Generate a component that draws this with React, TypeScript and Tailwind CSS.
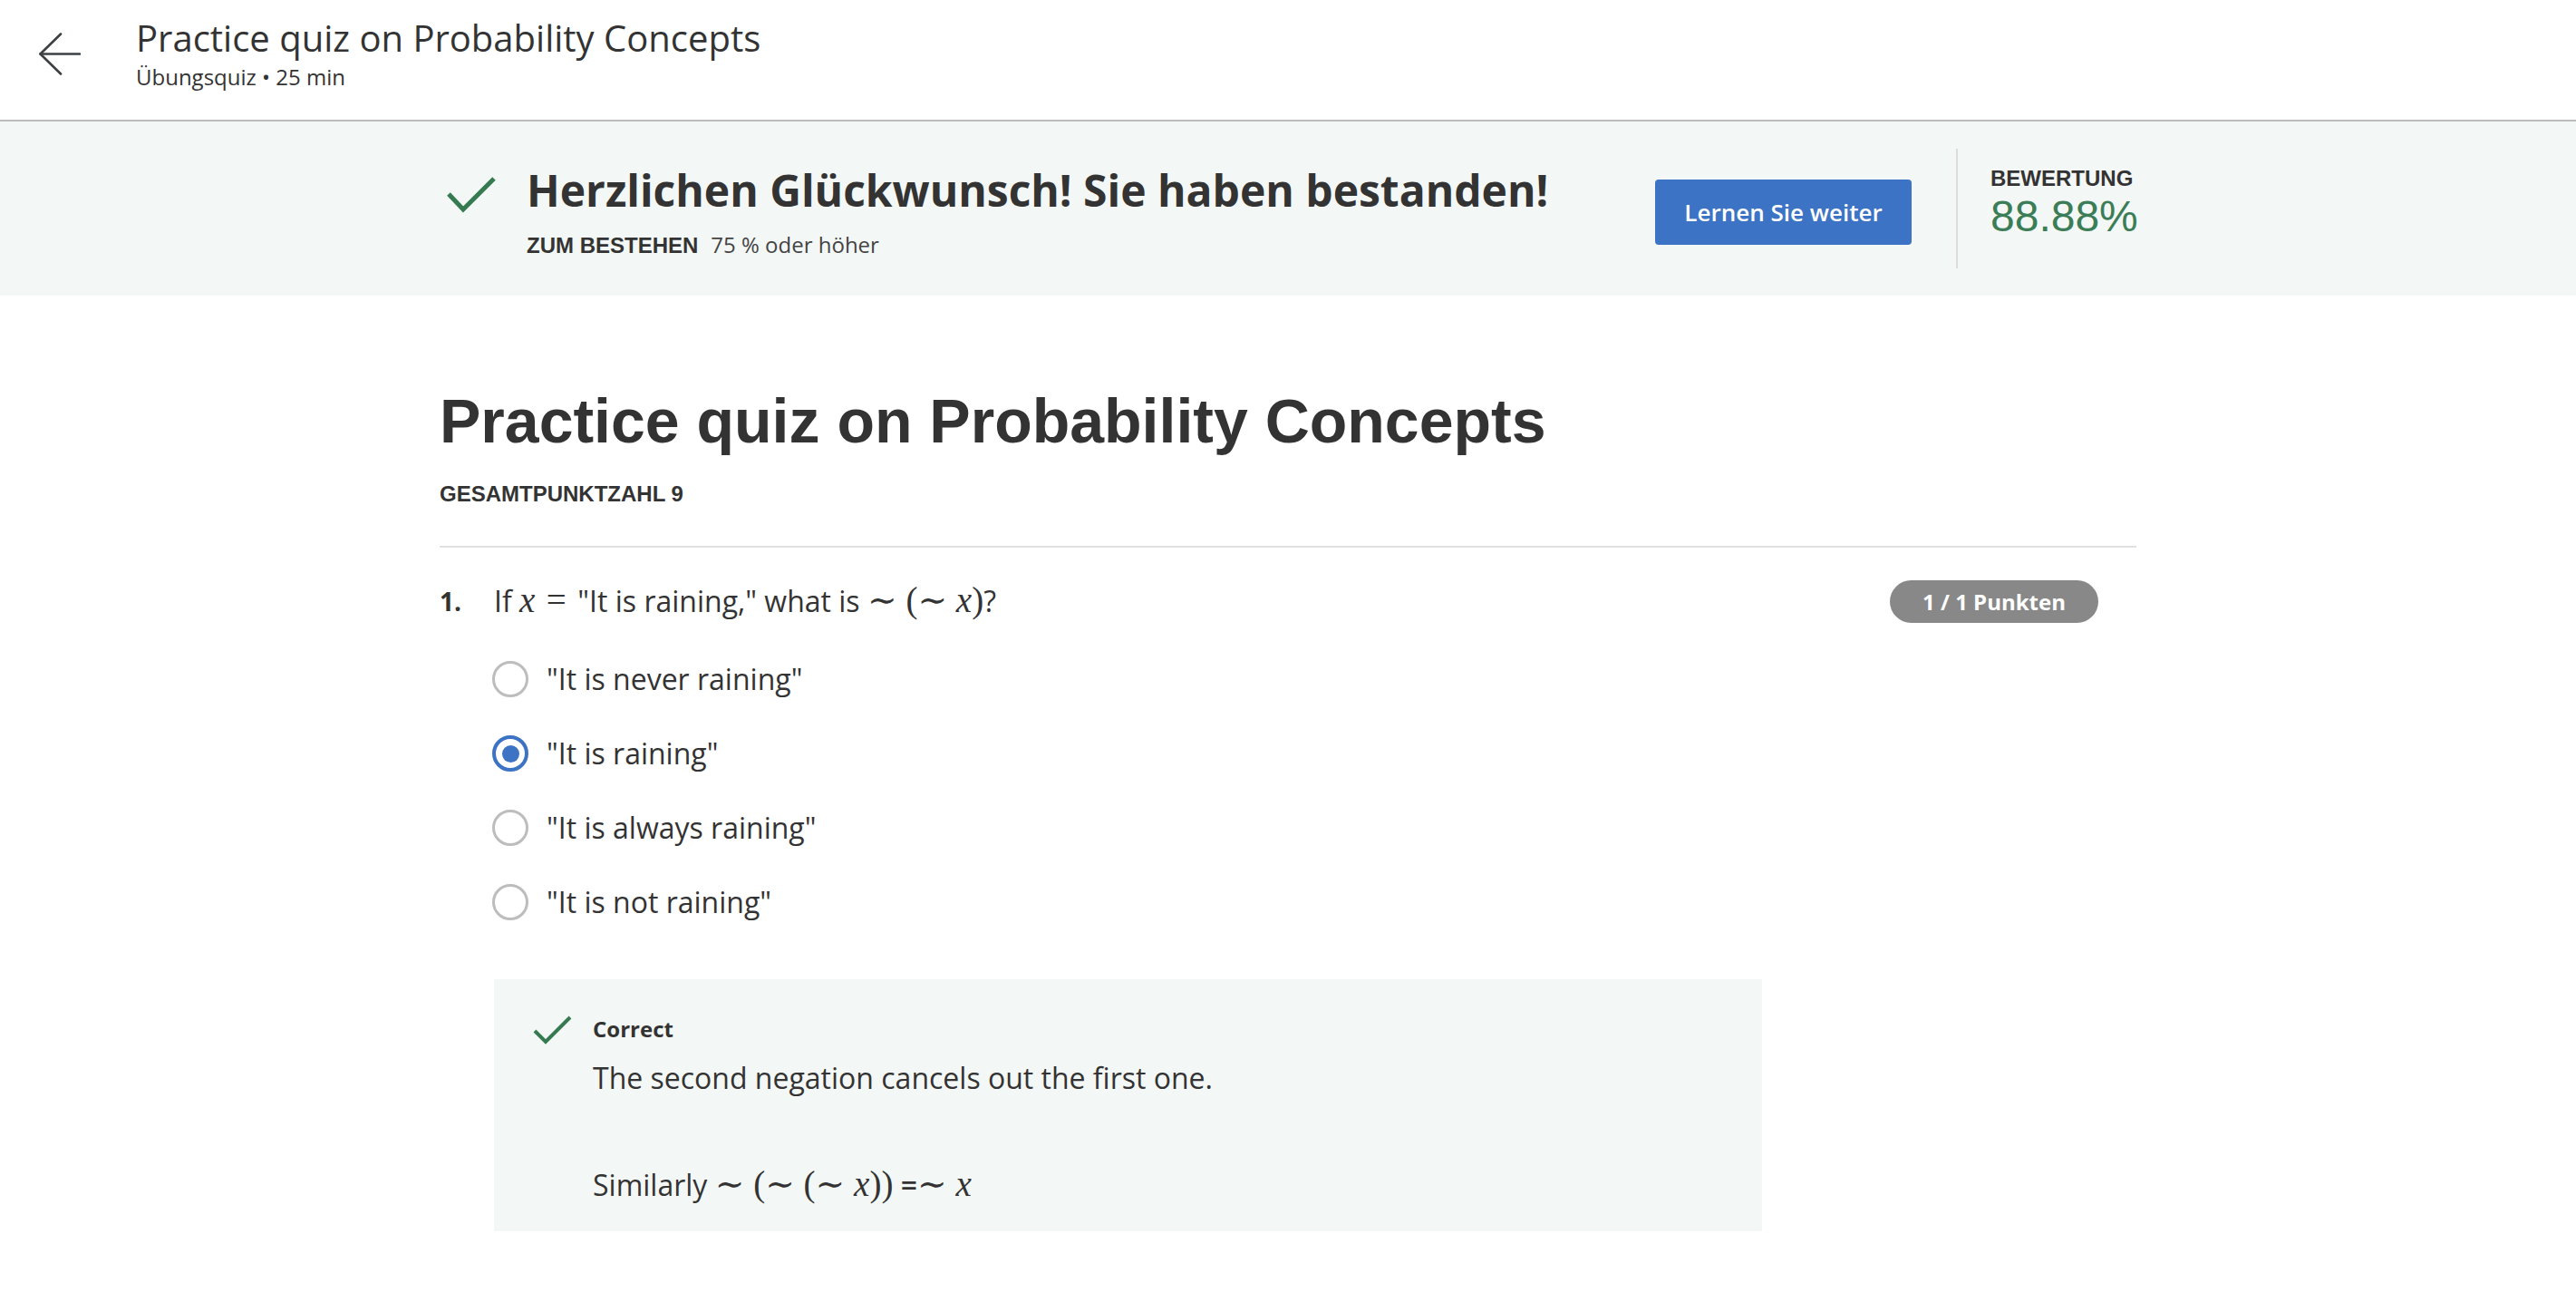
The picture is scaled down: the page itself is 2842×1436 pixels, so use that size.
import React from "react";

function M({ children }: { children: React.ReactNode }) {
  return (
    <span className="font-['Liberation_Serif','DejaVu_Serif',serif] text-[1.22em] leading-none">
      {children}
    </span>
  );
}

function X() {
  return <span className="italic">x</span>;
}

function Radio({ checked }: { checked?: boolean }) {
  if (checked) {
    return (
      <span className="ml-[-2px] flex h-[40px] w-[40px] shrink-0 items-center justify-center rounded-full border-[4px] border-[#3d73c5] bg-white">
        <span className="h-[19px] w-[19px] rounded-full bg-[#3d73c5]" />
      </span>
    );
  }
  return (
    <span className="ml-[-2px] h-[40px] w-[40px] shrink-0 rounded-full border-[3px] border-[#bdbdbd] bg-white" />
  );
}

const options = [
  { label: '"It is never raining"', checked: false },
  { label: '"It is raining"', checked: true },
  { label: '"It is always raining"', checked: false },
  { label: '"It is not raining"', checked: false },
];

export default function App() {
  return (
    <div className="min-h-screen bg-white font-['Open_Sans','Noto_Sans',sans-serif] text-[#333333]">
      {/* Header */}
      <header className="flex h-[134px] items-start border-b-2 border-[#bdbdbd] pl-[43px]">
        <svg
          className="mt-[36px] h-[47px] w-[46px] shrink-0"
          viewBox="0 0 46 47"
          fill="none"
          stroke="#3c4043"
          strokeWidth="2.6"
          strokeLinecap="round"
          strokeLinejoin="round"
        >
          <polyline points="24,1.5 1.5,23.5 24,45.5" />
          <line x1="1.5" y1="23.5" x2="45" y2="23.5" />
        </svg>
        <div className="ml-[61px] pt-[17px]">
          <div className="text-[40px] leading-[50px] text-[#333]">Practice quiz on Probability Concepts</div>
          <div className="text-[24px] leading-[36px] text-[#333]">Übungsquiz • 25 min</div>
        </div>
      </header>

      {/* Banner */}
      <section className="flex h-[192px] items-center bg-[#f3f8f6]">
        <div className="mx-auto flex w-[1872px] items-center">
          <div className="flex flex-1 items-start pt-[8px]">
            <svg
              className="ml-[7px] mt-[13px] h-[44px] w-[56px] shrink-0"
              viewBox="0 0 56 44"
              fill="none"
              stroke="#357a50"
              strokeWidth="5"
            >
              <polyline points="3,21 19,38 53,4" />
            </svg>
            <div className="ml-[33px]">
              <div className="text-[48px] font-bold leading-[60px] text-[#333]">
                Herzlichen Glückwunsch! Sie haben bestanden!
              </div>
              <div className="mt-[12px] flex items-baseline leading-[36px]">
                <span className="font-['Liberation_Sans',Arial,sans-serif] text-[24px] font-bold text-[#333]">
                  ZUM BESTEHEN
                </span>
                <span className="ml-[14px] text-[24px] text-[#444]">75 % oder höher</span>
              </div>
            </div>
          </div>
          <button className="mt-[8px] flex h-[72px] w-[283px] shrink-0 items-center justify-center rounded-[4px] bg-[#3d73c5] text-[26px] font-semibold text-white">
            Lernen Sie weiter
          </button>
          <div className="ml-[49px] h-[132px] w-[2px] shrink-0 bg-[#dcdcdc]" />
          <div className="mb-[10px] ml-[36px] w-[161px] shrink-0 font-['Liberation_Sans',Arial,sans-serif]">
            <div className="text-[24px] font-bold leading-[28px] text-[#333]">BEWERTUNG</div>
            <div className="text-[48px] leading-[56px] text-[#3b7d57]">88.88%</div>
          </div>
        </div>
      </section>

      {/* Main */}
      <main className="mx-auto w-[1872px] pt-[97px]">
        <h1 className="font-['Liberation_Sans',Arial,sans-serif] text-[68px] font-bold leading-[82px] text-[#333]">
          Practice quiz on Probability Concepts
        </h1>
        <div className="mt-[22px] font-['Liberation_Sans',Arial,sans-serif] text-[24px] font-bold leading-[36px] text-[#333]">
          GESAMTPUNKTZAHL 9
        </div>
        <div className="mt-[39px] h-[2px] bg-[#e1e1e1]" />

        <div className="mt-[35px] flex">
          <div className="w-[60px] shrink-0 text-[28px] font-bold leading-[48px] text-[#333]">1.</div>
          <div className="flex-1">
            <div className="flex items-start justify-between pr-[42px]">
              <div className="text-[32px] leading-[48px] text-[#333]">
                If <M><X /></M>
                <M><span className="mx-[0.32em]">=</span></M>
                "It is raining," what is{" "}
                <M>
                  ∼ (∼ <X />)
                </M>
                ?
              </div>
              <div className="mt-[1px] flex h-[47px] w-[230px] items-center justify-center rounded-full bg-[#888888] text-[24px] font-bold text-white">
                1 / 1 Punkten
              </div>
            </div>

            <div className="mt-[21px] flex flex-col">
              {options.map((o) => (
                <div key={o.label} className="flex h-[82px] items-center">
                  <Radio checked={o.checked} />
                  <span className="ml-[20px] text-[32px] leading-[48px] text-[#333]">{o.label}</span>
                </div>
              ))}
            </div>

            <div className="mt-[44px] flex w-[1399px] bg-[#f3f8f6] pb-[27px] pl-[43px] pt-[37px]">
              <svg
                className="mt-[3px] h-[32px] w-[43px] shrink-0"
                viewBox="0 0 43 32"
                fill="none"
                stroke="#357a50"
                strokeWidth="4"
              >
                <polyline points="2,17 14,29 41,2" />
              </svg>
              <div className="ml-[23px]">
                <div className="text-[24px] font-bold leading-[36px] text-[#333]">Correct</div>
                <p className="mt-[12px] text-[32px] leading-[48px] text-[#333]">
                  The second negation cancels out the first one.
                </p>
                <p className="mt-[70px] text-[32px] leading-[48px] text-[#333]">
                  Similarly{" "}
                  <M>
                    ∼ (∼ (∼ <X />))
                  </M>{" "}
                  <span className="font-semibold">=</span><M>∼ <X /></M>
                </p>
              </div>
            </div>
          </div>
        </div>
      </main>
    </div>
  );
}
